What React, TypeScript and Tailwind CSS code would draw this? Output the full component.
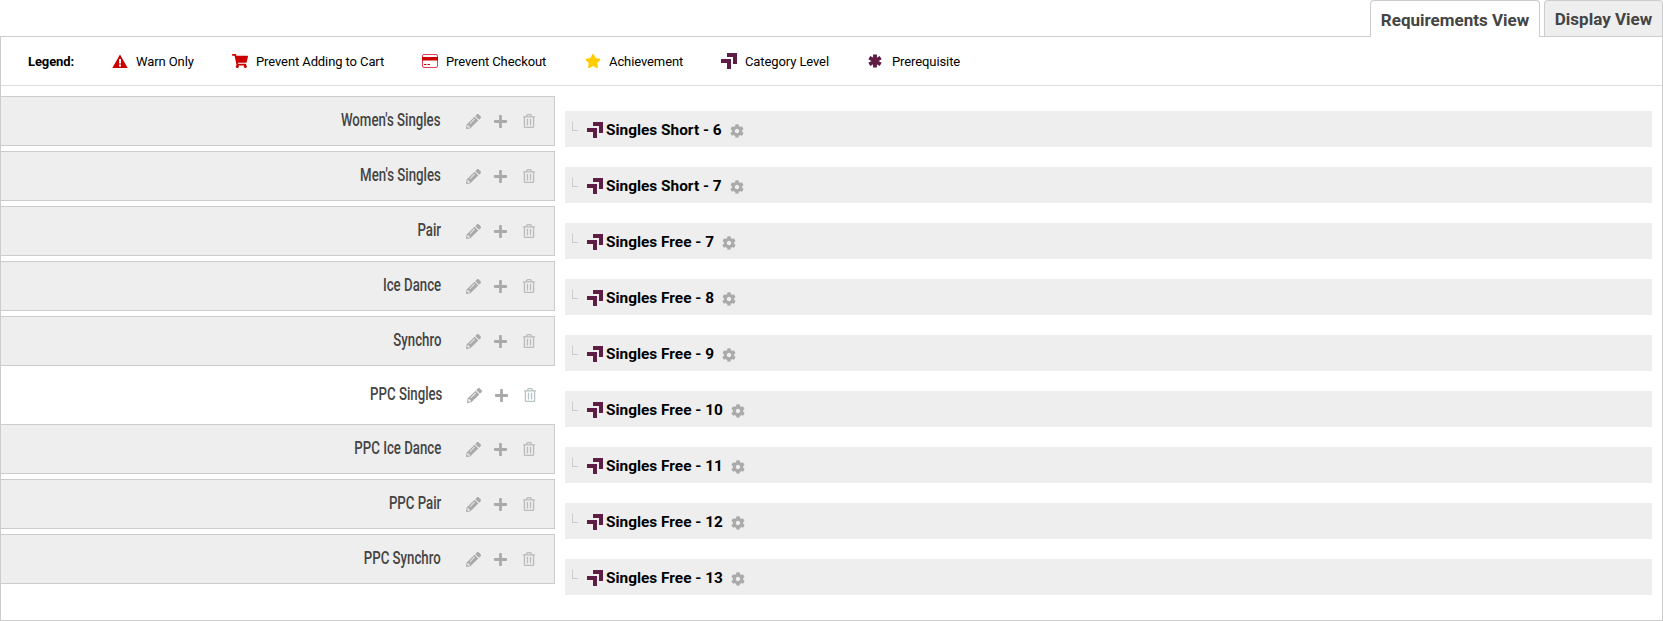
import React from 'react';
import { FaCog, FaPencilAlt, FaPlus, FaRegTrashAlt, FaShoppingCart, FaStar } from 'react-icons/fa';

const disciplines = [
  { name: "Women's Singles" },
  { name: "Men's Singles" },
  { name: 'Pair' },
  { name: 'Ice Dance' },
  { name: 'Synchro' },
  { name: 'PPC Singles', active: true },
  { name: 'PPC Ice Dance' },
  { name: 'PPC Pair' },
  { name: 'PPC Synchro' },
];

const levels = [
  'Singles Short - 6',
  'Singles Short - 7',
  'Singles Free - 7',
  'Singles Free - 8',
  'Singles Free - 9',
  'Singles Free - 10',
  'Singles Free - 11',
  'Singles Free - 12',
  'Singles Free - 13',
];

function CategoryIcon({ className }: { className?: string }) {
  return (
    <svg viewBox="0 0 16 16" className={className} fill="#5f1d45">
      <path d="M6 0h10v11h-4V4H6z" />
      <path d="M0 6h10v10H6V10H0z" />
    </svg>
  );
}

function CardIcon({ className }: { className?: string }) {
  return (
    <svg viewBox="0 0 16 14" className={className}>
      <rect x="0.5" y="0.5" width="15" height="13" rx="1.5" fill="#fff" stroke="#e0405a" />
      <rect x="0" y="3" width="16" height="3.5" fill="#cc0000" />
      <rect x="2" y="10" width="2.5" height="1" fill="#cc0000" />
      <rect x="5.5" y="10" width="2.5" height="1" fill="#cc0000" />
    </svg>
  );
}

function WarnIcon({ className }: { className?: string }) {
  return (
    <svg viewBox="0 0 16 14" className={className}>
      <path d="M8 0.5 15.7 14H0.3z" fill="#cc0000" />
      <path d="M7 5h2v4.6H7zM7 10.6h2v2H7z" fill="#fff" />
    </svg>
  );
}

function PrereqIcon({ className }: { className?: string }) {
  return (
    <svg viewBox="0 0 16 16" className={className} stroke="#5f1d45" strokeWidth="4.4">
      <path d="M8 0.5v15M1.5 4.2l13 7.6M14.5 4.2l-13 7.6" />
    </svg>
  );
}

function LegendItem({ icon, label, className }: { icon: React.ReactNode; label: string; className: string }) {
  return (
    <div className={`flex items-center ${className}`}>
      <span className="flex w-[24px] items-center">{icon}</span>
      <span className="mt-[2px]">{label}</span>
    </div>
  );
}

export default function App() {
  return (
    <div className="h-[621px] w-[1663px] bg-white font-['Roboto',sans-serif]">
      <div className="flex h-[36px] items-end justify-end">
        <div className="relative top-px flex h-[37px] w-[170px] items-center justify-center rounded-t border border-b-0 border-[#ccc] bg-white pt-[3px] text-[17px] font-bold text-[#444]">
          Requirements View
        </div>
        <div className="ml-1 flex h-[36px] w-[119px] items-center justify-center rounded-t border border-b-0 border-[#ccc] bg-[#eee] pt-[3px] text-[17px] font-bold text-[#444]">
          Display View
        </div>
      </div>

      <div className="h-[585px] border border-[#ccc]">
        <div className="flex h-[49px] items-center border-b border-[#ddd] pl-[27px] text-[13px] tracking-[-0.1px] text-black">
          <span className="mt-[1px] w-[84px] font-bold">Legend:</span>
          <LegendItem className="w-[120px]" label="Warn Only" icon={<WarnIcon className="h-[14px] w-[16px]" />} />
          <LegendItem className="w-[190px]" label="Prevent Adding to Cart" icon={<FaShoppingCart className="size-[16px] text-[#cc0000]" />} />
          <LegendItem className="w-[163px]" label="Prevent Checkout" icon={<CardIcon className="h-[14px] w-[16px]" />} />
          <LegendItem className="w-[136px]" label="Achievement" icon={<FaStar className="size-[16px] text-[#ffcc00]" />} />
          <LegendItem className="w-[147px]" label="Category Level" icon={<CategoryIcon className="size-[16px]" />} />
          <LegendItem className="w-[140px]" label="Prerequisite" icon={<PrereqIcon className="size-[14px]" />} />
        </div>

        <div className="flex">
          <div className="-ml-px w-[555px] shrink-0 pt-[10px]">
            {disciplines.map((d) => (
              <div
                key={d.name}
                className={
                  d.active
                    ? 'mb-[5px] flex h-[48px] items-center justify-end pr-[18px]'
                    : 'mb-[5px] flex h-[50px] items-center justify-end border border-[#ccc] bg-[#eee] pr-[18px]'
                }
              >
                <span className="-mt-[3px] origin-right scale-x-[0.735] whitespace-nowrap text-[18px] font-medium text-[#444]">{d.name}</span>
                <FaPencilAlt className="ml-[25px] size-[15px] text-[#aaa]" />
                <FaPlus className="ml-[12px] size-[15px] text-[#aaa]" />
                <FaRegTrashAlt className={d.active ? 'ml-[14px] size-[14px] text-[#b5c4c4]' : 'ml-[14px] size-[14px] text-[#bbb]'} />
              </div>
            ))}
          </div>

          <div className="ml-[10px] w-[1087px] pt-[25px]">
            {levels.map((level) => (
              <div key={level} className="mb-[20px] flex h-[36px] items-center bg-[#eee] pl-[7px]">
                <span className="-mt-[6px] h-[9px] w-[6px] border-b border-l border-[#ccc]" />
                <CategoryIcon className="ml-[9px] mt-[1px] size-[16px]" />
                <span className="ml-[3px] mt-[3px] text-[15.4px] font-bold text-black">{level}</span>
                <FaCog className="ml-[8px] mt-[3px] size-[14px] text-[#aaa]" />
              </div>
            ))}
          </div>
        </div>
      </div>
    </div>
  );
}
